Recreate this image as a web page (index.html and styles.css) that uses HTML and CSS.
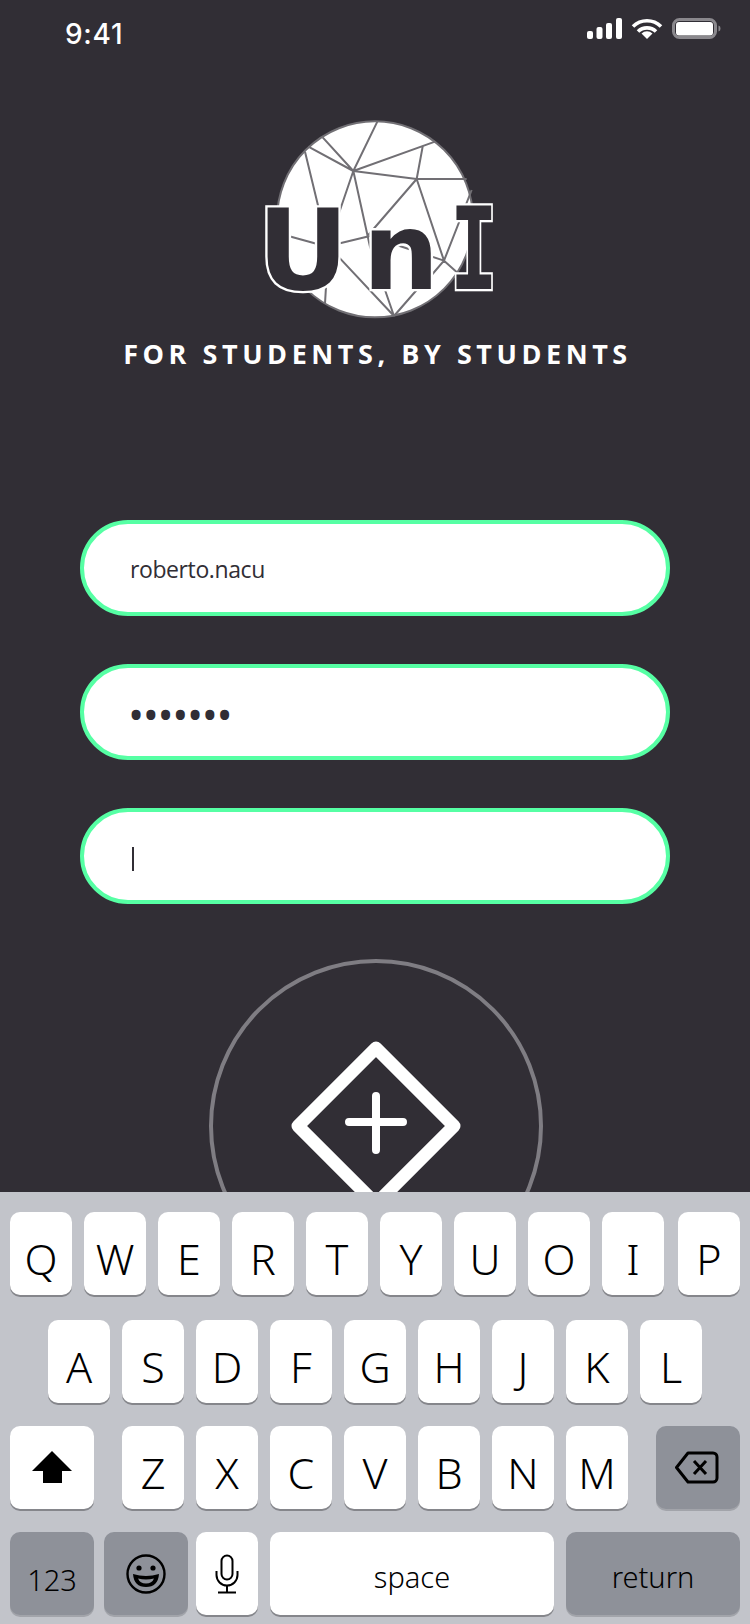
FILE: index.html
```html
<!DOCTYPE html>
<html lang="en">
<head>
<meta charset="utf-8">
<title>UnI</title>
<link rel="stylesheet" href="styles.css">
</head>
<body>
<div class="screen">
  <main class="content">
    <header class="status">
      <span class="time">9:41</span>
      <svg class="status-icons" width="138" height="24" viewBox="0 0 138 24">
        <g fill="#fff">
          <rect x="2" y="13" width="6" height="8" rx="2"/>
          <rect x="11.500" y="9" width="6" height="12" rx="2"/>
          <rect x="21" y="5" width="6" height="16" rx="2"/>
          <rect x="31" y="0" width="6" height="21" rx="2"/>
        </g>
        <g fill="none" stroke="#fff" stroke-width="3.600">
          <path d="M48 8.500a20 20 0 0 1 28 0"/>
          <path d="M53 13.500a13 13 0 0 1 18 0"/>
        </g>
        <path d="M62 21l-5.500-5.500a8 8 0 0 1 11 0z" fill="#fff"/>
        <rect x="88.500" y="1.500" width="42" height="18" rx="6" fill="none" stroke="#8a888d" stroke-width="3"/>
        <rect x="91" y="4" width="37" height="13.500" rx="3" fill="#fff"/>
        <path d="M133.500 7.500v6a3 3 0 0 0 2-3 3 3 0 0 0-2-3z" fill="#8a888d"/>
      </svg>
    </header>

    <div class="logo">
      <svg width="270" height="230" viewBox="0 0 810 690">
        <circle cx="405" cy="358" r="294" fill="#fff" stroke="#716f74" stroke-width="6"/>
        <g fill="none" stroke="#716f74" stroke-width="6">
          <path d="M412 65L340 213M248 112L340 213M205 140L340 213M340 213L585 125M340 213L530 237M548 140L530 237M530 237L680 237"/>
          <path d="M195 155L235 320M340 213L295 345M340 213L390 440L405 480M530 237L385 405M530 237L612 482M695 270L612 482M612 482L660 525M612 482L575 525M470 435L612 482"/>
          <path d="M145 408L232 432M300 430L390 408M295 470L462 648M462 648L435 570M462 648L530 570M258 560L255 610"/>
        </g>
        <g class="logo-letters">
          <text class="logo-sans" x="52" y="568" font-size="338">U</text>
          <text class="logo-sans" x="368" y="566" font-size="322">n</text>
          <text class="logo-mono" transform="translate(629 566) scale(0.7 1)" font-size="343">I</text>
        </g>
      </svg>
    </div>
    <p class="tagline">FOR STUDENTS, BY STUDENTS</p>

    <form class="fields">
      <div class="field field-name">roberto.nacu</div>
      <div class="field field-dots">•••••••</div>
      <div class="field"><span class="caret"></span></div>
    </form>

    <div class="add-ring">
      <svg width="180" height="180" viewBox="0 0 180 180">
        <path d="M90 12L168 90L90 168L12 90Z" fill="none" stroke="#fff" stroke-width="13" stroke-linejoin="round"/>
        <path d="M90 60V114M63 86H117" fill="none" stroke="#fff" stroke-width="8" stroke-linecap="round"/>
      </svg>
    </div>
  </main>

  <section class="keyboard">
    <div class="row row-top">
      <div class="key">Q</div><div class="key">W</div><div class="key">E</div><div class="key">R</div><div class="key">T</div><div class="key">Y</div><div class="key">U</div><div class="key">O</div><div class="key">I</div><div class="key">P</div>
    </div>
    <div class="row row-home">
      <div class="key">A</div><div class="key">S</div><div class="key">D</div><div class="key">F</div><div class="key">G</div><div class="key">H</div><div class="key">J</div><div class="key">K</div><div class="key">L</div>
    </div>
    <div class="row row-shift">
      <div class="key key-wide">
        <svg width="40" height="33" viewBox="0 0 40 33"><path d="M20 0L40 20H30V32H11V20H0Z" fill="#000"/></svg>
      </div>
      <div class="key">Z</div><div class="key">X</div><div class="key">C</div><div class="key">V</div><div class="key">B</div><div class="key">N</div><div class="key">M</div>
      <div class="key key-wide key-dark">
        <svg width="46" height="33" viewBox="0 0 46 33"><path d="M13 2H38a4 4 0 0 1 4 4V27a4 4 0 0 1-4 4H13L1.500 16.500Z" fill="none" stroke="#000" stroke-width="3" stroke-linejoin="round"/><path d="M19 10L31 23M31 10L19 23" stroke="#000" stroke-width="3"/></svg>
      </div>
    </div>
    <div class="row row-bottom">
      <div class="key key-wide key-dark key-small key-num">123</div>
      <div class="key key-wide key-dark">
        <svg width="40" height="40" viewBox="0 0 40 40"><circle cx="20" cy="20" r="18.500" fill="none" stroke="#000" stroke-width="2.400"/><circle cx="13" cy="14" r="2.600"/><circle cx="27" cy="14" r="2.600"/><path d="M7 20Q20 24 33 20Q32 33 20 33Q8 33 7 20Z" fill="#000"/><path d="M12 24.500Q20 26.500 28 24.500Q26 29.500 20 29.500Q14 29.500 12 24.500Z" fill="#8e9199"/></svg>
      </div>
      <div class="key">
        <svg width="24" height="40" viewBox="0 0 24 40"><rect x="6.500" y="1.500" width="11" height="24" rx="5.500" fill="none" stroke="#000" stroke-width="2"/><path d="M1.500 17v4a10.500 10.500 0 0 0 21 0v-4M12 31.500V38M3 38.500H21" fill="none" stroke="#000" stroke-width="2"/></svg>
      </div>
      <div class="key key-space key-small">space</div>
      <div class="key key-return key-dark key-small">return</div>
    </div>
  </section>
</div>
</body>
</html>
```

FILE: styles.css
```css
* { box-sizing: border-box; }
html, body { margin: 0; padding: 0; }
body { width: 750px; height: 1624px; overflow: hidden; }

.screen {
  width: 750px;
  height: 1624px;
  display: flex;
  flex-direction: column;
  background: #312e35;
  font-family: "Open Sans", "Noto Sans", sans-serif;
}

.content {
  height: 1192px;
  flex: none;
  overflow: hidden;
  display: flex;
  flex-direction: column;
  align-items: center;
}

.status {
  width: 100%;
  height: 100px;
  flex: none;
  padding: 19px 27px 0 65px;
  display: flex;
  justify-content: space-between;
  align-items: flex-start;
}
.time {
  font-family: Inter, "Liberation Sans", sans-serif;
  font-size: 28px;
  font-weight: 500;
  line-height: 30px;
  letter-spacing: 0.700px;
  color: #fff;
}
.status-icons { display: block; margin-top: -1px; }

.logo { height: 230px; flex: none; width: 270px; }
.logo svg { display: block; }
.logo-letters text {
  fill: #312e35;
  stroke: #fff;
  stroke-width: 14px;
  paint-order: stroke;
}
.logo-sans { font-family: "DejaVu Sans", sans-serif; font-weight: 700; }
.logo-mono { font-family: "DejaVu Sans Mono", monospace; font-weight: 700; }

.tagline {
  margin: 6px 0 0 5px;
  font-size: 27px;
  line-height: 36px;
  font-weight: 700;
  letter-spacing: 4.550px;
  color: #fff;
  white-space: nowrap;
}

.fields {
  margin-top: 148px;
  display: flex;
  flex-direction: column;
  gap: 48px;
  width: 590px;
}
.field {
  height: 96px;
  border: 4px solid #56ffa4;
  border-radius: 48px;
  background: #fff;
  padding: 0 0 0 47px;
  display: flex;
  align-items: center;
  font-size: 23px;
  letter-spacing: -0.400px;
  color: #312e35;
}
.field-name { padding: 2px 0 0 46px; }
.field-dots { font-size: 43px; letter-spacing: -1.400px; padding: 4px 0 0 44px; }
.caret { width: 2px; height: 24px; background: #312e35; margin: 6px 0 0 1px; }

.add-ring {
  margin: 55px 0 0 2px;
  width: 334px;
  height: 334px;
  flex: none;
  border: 4px solid #7f7d83;
  border-radius: 50%;
  display: flex;
  align-items: center;
  justify-content: center;
}
.add-ring svg { display: block; }

.keyboard {
  height: 432px;
  flex: none;
  background: #c2c4ca;
  padding: 20px 10px 0;
  display: flex;
  flex-direction: column;
  gap: 23px;
  font-family: "Noto Sans", "Open Sans", sans-serif;
}
.row { display: flex; gap: 12px; height: 83px; }
.row-top .key:last-child { margin-left: 2px; }
.row-home { margin-top: 2px; padding-left: 38px; }
.row-shift .key-wide:first-child { margin-right: 16px; }
.row-shift .key-wide:last-child { margin-left: 16px; }
.row-bottom .key:nth-child(1) { margin-right: -2px; }
.row-bottom .key:nth-child(2) { margin-right: -4px; }

.key {
  width: 62px;
  height: 83px;
  flex: none;
  background: #fff;
  border-radius: 10px;
  box-shadow: 0 2px 0 #85868b;
  display: flex;
  align-items: center;
  justify-content: center;
  padding-top: 10px;
  font-size: 43px;
  font-weight: 300;
  line-height: 1;
  color: #000;
}
.key svg { display: block; margin-top: -10px; }
.key-wide { width: 84px; }
.key-dark { background: #8e9199; box-shadow: 0 2px 0 #a2a4aa; }
.key-small { font-size: 29px; font-weight: 350; padding-top: 6px; }
.key-num { padding-top: 12px; font-weight: 300; }
.key-space { width: 284px; }
.key-return { width: 174px; }
```
